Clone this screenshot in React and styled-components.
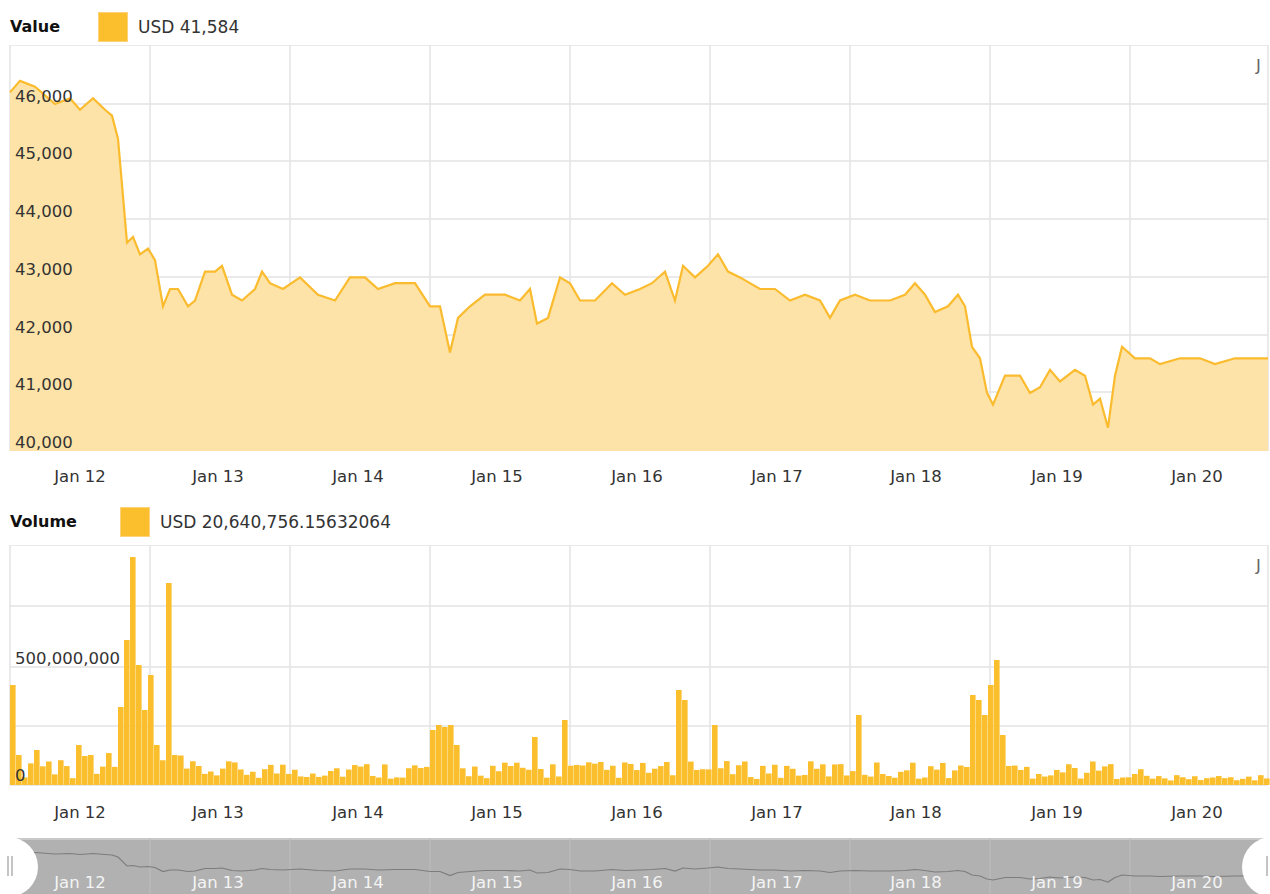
import React from 'react'
import styled, { createGlobalStyle } from 'styled-components'

const Global = createGlobalStyle`
  body { margin: 0; background: #fff; font-family: "DejaVu Sans", Verdana, sans-serif; }
`

const Page = styled.div`
  width: 1270px;
  height: 894px;
  display: flex;
  flex-direction: column;
  overflow: hidden;
`

const Legend = styled.div`
  height: ${p => p.$h}px;
  display: flex;
  align-items: center;
  gap: 10px;
  padding-left: 10px;
  padding-top: 8px;
  box-sizing: border-box;
  font-size: 17px;
  color: #333;
`

const Title = styled.b`
  font-weight: bold;
  font-size: 16px;
  color: #111;
  width: ${p => p.$w}px;
`

const Swatch = styled.span`
  width: 30px;
  height: 30px;
  background: #fbbf2e;
  border: 1px solid #fcd27a;
  box-sizing: border-box;
`

const Chart = styled.svg`
  display: block;
  font-family: "DejaVu Sans", Verdana, sans-serif;
`

const Navigator = styled.svg`
  display: block;
  margin-top: 16px;
  font-family: "DejaVu Sans", Verdana, sans-serif;
`

const GRID = '#e3e3e3'
const X0 = 10
const X1 = 1268
const vGrid = [10, 150, 290, 430, 570, 710, 850, 990, 1130]
const days = ['Jan 12', 'Jan 13', 'Jan 14', 'Jan 15', 'Jan 16', 'Jan 17', 'Jan 18', 'Jan 19', 'Jan 20']
const labelX = [80, 218, 358, 497, 637, 777, 916, 1057, 1197]

// prijs (in duizenden) per x-positie
const keys = [[10,46.2],[20,46.4],[35,46.3],[55,46.0],[70,46.1],[80,45.9],[93,46.1],[105,45.9],[112,45.8],[118,45.4],[127,43.6],[133,43.7],[140,43.4],[148,43.5],[155,43.3],[163,42.5],[170,42.8],[178,42.8],[188,42.5],[195,42.6],[205,43.1],[215,43.1],[222,43.2],[232,42.7],[242,42.6],[255,42.8],[262,43.1],[270,42.9],[283,42.8],[300,43.0],[318,42.7],[335,42.6],[350,43.0],[365,43.0],[378,42.8],[395,42.9],[415,42.9],[430,42.5],[440,42.5],[450,41.7],[458,42.3],[470,42.5],[485,42.7],[505,42.7],[520,42.6],[530,42.8],[537,42.2],[548,42.3],[560,43.0],[570,42.9],[580,42.6],[595,42.6],[612,42.9],[625,42.7],[640,42.8],[652,42.9],[665,43.1],[675,42.6],[683,43.2],[695,43.0],[708,43.2],[718,43.4],[728,43.1],[740,43.0],[760,42.8],[775,42.8],[790,42.6],[805,42.7],[820,42.6],[830,42.3],[840,42.6],[855,42.7],[870,42.6],[890,42.6],[905,42.7],[915,42.9],[925,42.7],[935,42.4],[948,42.5],[958,42.7],[965,42.5],[972,41.8],[980,41.6],[987,41.0],[993,40.8],[1005,41.3],[1020,41.3],[1030,41.0],[1040,41.1],[1050,41.4],[1060,41.2],[1075,41.4],[1085,41.3],[1093,40.8],[1100,40.9],[1108,40.4],[1115,41.3],[1122,41.8],[1135,41.6],[1150,41.6],[1160,41.5],[1180,41.6],[1200,41.6],[1215,41.5],[1235,41.6],[1250,41.6],[1268,41.6]]

const priceY = v => 59 + (46 - v) * 57.8
const linePts = keys.map(([x, v]) => `${x},${priceY(v).toFixed(1)}`).join(' ')
const areaPts = `${X0},406 ${linePts} ${X1},406`

const spikes = { 10:100, 16:30, 34:35, 76:40, 88:30, 118:78, 124:145, 130:228, 136:120, 142:75, 148:110, 154:40, 166:202, 172:30, 240:52, 430:55, 436:60, 442:58, 448:60, 454:40, 532:48, 562:65, 676:95, 682:85, 712:60, 818:55, 824:40, 856:70, 970:90, 976:85, 982:70, 988:100, 994:125, 1000:50, 1098:60, 1104:95, 1110:95, 1116:92, 1122:85, 1128:95, 1134:40 }
const bars = []
for (let x = X0, i = 0; x < X1; x += 6, i++) {
  const r = Math.abs(Math.sin(i * 12.9898) * 43758.5453) % 1
  const base = x > 1140 ? 4 + r * 6 : 6 + r * (x < 180 ? 28 : 18)
  bars.push([x, spikes[x] || base])
}

const navY = v => 14 + (46.4 - v) * 5
const navPts = keys.map(([x, v]) => `${x},${navY(v).toFixed(1)}`).join(' ')

const Grid = ({ h, rows }) => <g stroke={GRID} strokeWidth='1.5'>
  {vGrid.map(x => <line key={x} x1={x} x2={x} y1={0} y2={h} />)}
  <line x1={X1} x2={X1} y1={0} y2={h} />
  {rows.map(y => <line key={y} x1={X0} x2={X1} y1={y} y2={y} />)}
</g>

const DayLabels = ({ y }) => <g fontSize='16.5' fill='#333' textAnchor='middle'>
  {days.map((d, i) => <text key={d} x={labelX[i]} y={y}>{d}</text>)}
</g>

export default function App () {
  const priceRows = [0, 59, 116, 174, 232, 290, 347, 405]
  const priceLabels = ['46,000', '45,000', '44,000', '43,000', '42,000', '41,000', '40,000']
  return <Page>
    <Global />
    <Legend $h={45}><Title $w={78}>Value</Title><Swatch /><span>USD 41,584</span></Legend>
    <Chart width='1270' height='445'>
      <Grid h={406} rows={priceRows} />
      <polygon points={areaPts} fill='#fde3a7' />
      <polyline points={linePts} fill='none' stroke='#fbbb2e' strokeWidth='2.2' />
      <g fontSize='16.5' fill='#333'>
        {priceLabels.map((l, i) => <text key={l} x='15' y={priceRows[i + 1] - 2}>{l}</text>)}
        <text x='1256' y='26' fill='#666'>J</text>
      </g>
      <DayLabels y={437} />
    </Chart>
    <Legend $h={55}><Title $w={100}>Volume</Title><Swatch /><span>USD 20,640,756.15632064</span></Legend>
    <Chart width='1270' height='277'>
      <Grid h={240} rows={[0, 61, 122, 181, 240]} />
      <g fill='#fbbf2e'>
        {bars.map(([x, h]) => <rect key={x} x={x} y={240 - h} width='5.6' height={h} />)}
      </g>
      <g fontSize='16.5' fill='#333'>
        <text x='15' y='119'>500,000,000</text>
        <text x='15' y='236'>0</text>
        <text x='1256' y='26' fill='#666'>J</text>
      </g>
      <DayLabels y={273} />
    </Chart>
    <Navigator width='1270' height='56'>
      <rect x='0' y='0' width='1270' height='56' fill='#b1b1b1' />
      <line x1='0' x2='1270' y1='1' y2='1' stroke='#c9c9c9' strokeWidth='2' />
      {vGrid.slice(1).map(x => <line key={x} x1={x} x2={x} y1={0} y2={56} stroke='#bdbdbd' />)}
      <polyline points={navPts} fill='none' stroke='#7d7d7d' strokeWidth='1.2' />
      <g fontSize='16.5' fill='#f4f4f4' textAnchor='middle'>
        {days.map((d, i) => <text key={d} x={labelX[i]} y={50}>{d}</text>)}
      </g>
      <circle cx='8' cy='29' r='30' fill='#fff' />
      <rect x='7' y='18' width='2' height='20' fill='#c4c4c4' />
      <rect x='11' y='18' width='2' height='20' fill='#c4c4c4' />
      <circle cx='1272' cy='29' r='30' fill='#fff' />
      <rect x='1266' y='18' width='2' height='20' fill='#c4c4c4' />
    </Navigator>
  </Page>
}
